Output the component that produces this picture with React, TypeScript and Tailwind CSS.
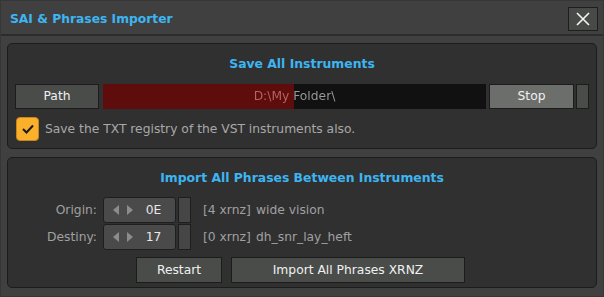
import React from "react";

const Arrows = () => (
  <div className="flex items-center gap-[8px] ml-[9px]">
    <svg width="6" height="10" viewBox="0 0 6 10"><polygon points="6,0 6,10 0,5" fill="#8c8c8c" /></svg>
    <svg width="6" height="10" viewBox="0 0 6 10"><polygon points="0,0 0,10 6,5" fill="#8c8c8c" /></svg>
  </div>
);

const ValueRow = ({ label, value, count, name }: { label: string; value: string; count: string; name: string }) => (
  <div className="flex items-center h-[26px]">
    <div className="w-[95px] text-right text-[#a0a0a0] pr-[6px]">{label}</div>
    <div className="w-[73px] h-[26px] bg-[#4a4a4a] border border-[#1e1e1e] rounded-[3px] flex items-center">
      <Arrows />
      <div className="flex-1 text-center text-[#e8e8e8] pr-[1px]">{value}</div>
    </div>
    <div className="w-[13px] h-[26px] ml-[2px] bg-[#464646] border border-[#1e1e1e]" />
    <div className="ml-[12px] text-[#a0a0a0] w-[53px] whitespace-nowrap">{count}</div>
    <div className="text-[#a0a0a0]">{name}</div>
  </div>
);

export default function App() {
  return (
    <div className="w-[604px] h-[297px] bg-[#404040] border border-[#363636] font-['DejaVu_Sans',sans-serif] text-[12.3px] leading-none flex flex-col overflow-hidden">
      <div className="h-[33px] flex items-center justify-between pl-[9px] pr-[5px] shrink-0">
        <div className="font-bold text-[12.3px] text-[#3db5f2] pt-[3px]">SAI &amp; Phrases Importer</div>
        <div className="w-[30px] h-[24px] bg-[#484a48] border border-[#1e1e1e] flex items-center justify-center mt-[2px]">
          <svg width="14" height="14" viewBox="0 0 14 14">
            <path d="M1 1 L13 13 M13 1 L1 13" stroke="#f4f4f4" strokeWidth="1.6" />
          </svg>
        </div>
      </div>
      <div className="h-[2px] bg-[#2c2c2c] shrink-0" />
      <div className="flex flex-col gap-[8px] px-[6px] pt-[7px]">
        <div className="h-[106px] bg-[#303030] border border-[#1c1c1c] rounded-[5px] flex flex-col px-[7px]">
          <div className="text-center font-bold text-[12.4px] text-[#3db5f2] mt-[14px] h-[13px]">Save All Instruments</div>
          <div className="flex items-center mt-[13px] h-[25px]">
            <div className="w-[84px] h-[25px] bg-[#4a4c4a] border border-[#1c1c1c] flex items-center justify-center text-[#f0f0f0]">Path</div>
            <div className="flex-1 h-[25px] ml-[4px] bg-[linear-gradient(to_right,#5e0c0c_191px,#111111_191px)] flex items-center">
              <div className="w-full text-center bg-[linear-gradient(to_right,#b86464_191px,#9c9c9c_191px)] bg-clip-text text-transparent">D:\My Folder\</div>
            </div>
            <div className="w-[85px] h-[25px] ml-[3px] bg-[#6c6e6c] border border-[#1c1c1c] flex items-center justify-center text-[#f0f0f0]">Stop</div>
            <div className="w-[13px] h-[25px] ml-[2px] bg-[#4a4c4a] border border-[#1c1c1c]" />
          </div>
          <div className="flex items-center mt-[8px]">
            <div className="w-[23px] h-[24px] ml-[1px] rounded-[4px] bg-[#fbb02c] border border-[#c88518] flex items-center justify-center">
              <svg width="12" height="10" viewBox="0 0 12 10">
                <path d="M1 5 L4.5 8.5 L11 1.5" stroke="#1a1a1a" strokeWidth="2" fill="none" />
              </svg>
            </div>
            <div className="ml-[6px] text-[#a8a8a8]">Save the TXT registry of the VST instruments also.</div>
          </div>
        </div>
        <div className="h-[131px] bg-[#303030] border border-[#1c1c1c] rounded-[5px] flex flex-col">
          <div className="text-center font-bold text-[12.4px] text-[#3db5f2] mt-[14px] h-[13px]">Import All Phrases Between Instruments</div>
          <div className="flex flex-col gap-[1px] mt-[12px]">
            <ValueRow label="Origin:" value="0E" count="[4 xrnz]" name="wide vision" />
            <ValueRow label="Destiny:" value="17" count="[0 xrnz]" name="dh_snr_lay_heft" />
          </div>
          <div className="flex items-center mt-[7px] ml-[128px] gap-[9px]">
            <div className="w-[86px] h-[26px] bg-[#4a4c4a] border border-[#1c1c1c] flex items-center justify-center text-[#f0f0f0]">Restart</div>
            <div className="w-[234px] h-[26px] bg-[#4a4c4a] border border-[#1c1c1c] flex items-center justify-center text-[#f0f0f0]">Import All Phrases XRNZ</div>
          </div>
        </div>
      </div>
    </div>
  );
}
